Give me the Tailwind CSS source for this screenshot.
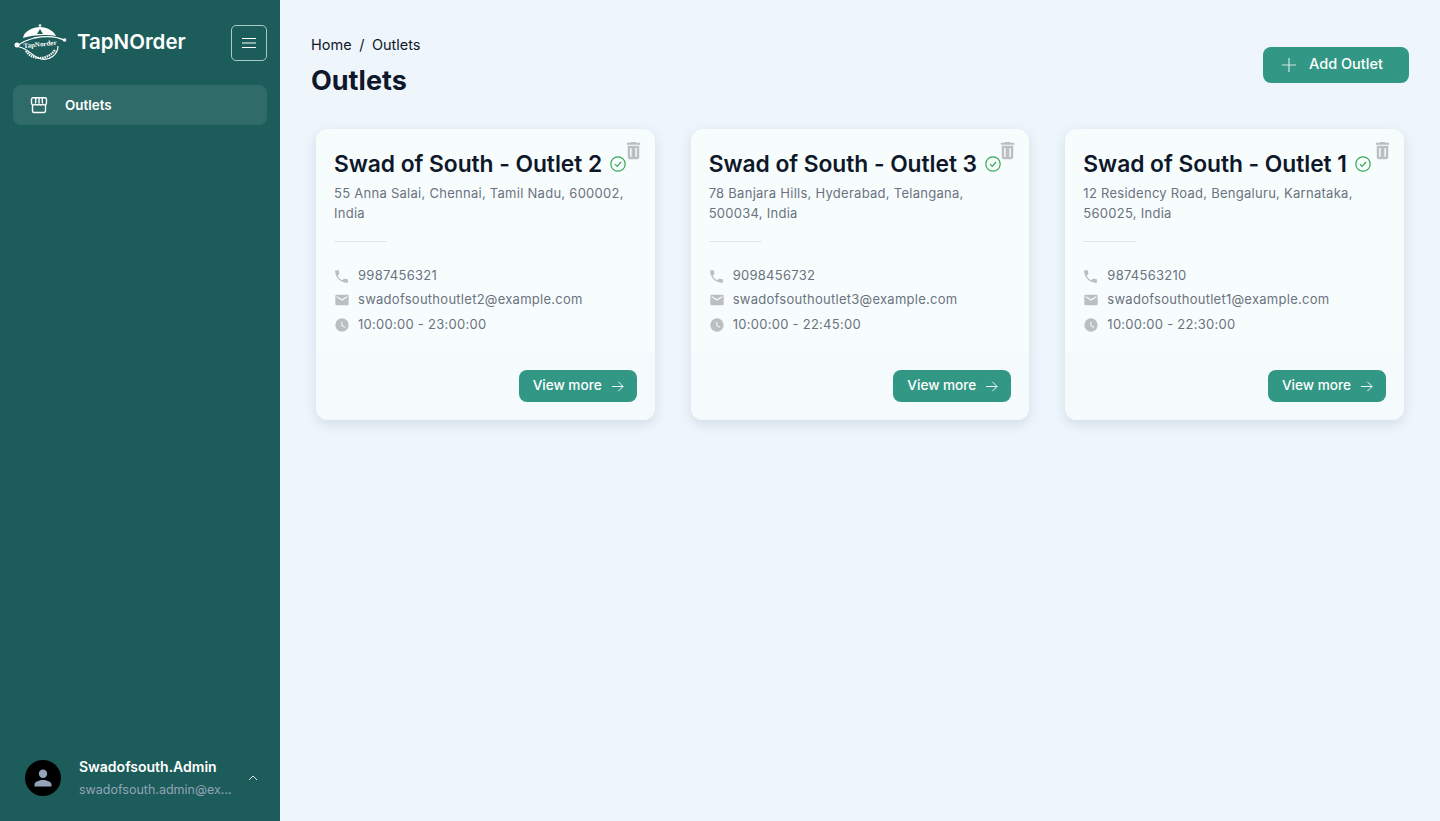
<!doctype html>
<html><head><meta charset="utf-8"><script src="https://cdn.jsdelivr.net/npm/@tailwindcss/browser@4"></script></head>
<body class="bg-[#eef6fc] font-['Inter',sans-serif]">
<div class="flex h-[821px] w-[1440px] overflow-hidden">
<aside class="flex w-[280px] shrink-0 flex-col bg-[#1c5c5a] text-white">
 <div class="flex h-[85px] items-center pr-[13px] pl-[14px]">
  <svg viewBox="0 0 54 40" class="h-[40px] w-[54px] shrink-0" fill="none">
   <path d="M9 15 C10 8 19 4 26 4 C33 4 40 8 42 13 C32 11 18 12 9 15Z" fill="#fff"/>
   <circle cx="26" cy="2.500" r="1.300" fill="#fff"/>
   <path d="M23 11 L26 6 L29 11Z" fill="#1c5c5a"/>
   <path d="M3 23 C8 19 13 17 20 15 C30 13 42 13 50 17" stroke="#fff" stroke-width="1.300"/>
   <circle cx="50.500" cy="17" r="1.800" fill="#fff"/>
   <circle cx="3" cy="22" r="2.500" fill="#fff"/>
   <path d="M5 24 C14 25 17 33 27 36 C36 38 44 31 44 23" stroke="#fff" stroke-width="1.200"/>
   <path d="M12 28 C18 37 33 38 41 27" stroke="#fff" stroke-width="2.200" stroke-dasharray="1.500 .8"/>
   <text x="26" y="23.500" text-anchor="middle" font-size="7" font-weight="800" fill="#fff" font-family="Liberation Serif" transform="rotate(-6 26 21)">TapNorder</text>
  </svg>
  <span class="mb-[2px] ml-[9px] text-[20.500px] leading-7 font-semibold">TapNOrder</span>
  <button class="ml-auto flex size-[36px] items-center justify-center rounded-[5px] border border-[#a9cbc8]">
   <svg viewBox="0 0 16 16" class="size-[16px]" stroke="#fff" stroke-width="1.100"><path d="M1 3.500H15M1 8H15M1 12.500H15"/></svg>
  </button>
 </div>
 <nav class="mx-[13px] flex h-[40px] items-center rounded-lg bg-[#2f6b69] pl-[17px]">
  <svg viewBox="0 0 18 18" class="size-[18px]" fill="none" stroke="#fff" stroke-width="1.400" stroke-linejoin="round"><path d="M2.500 9v6a1.500 1.500 0 0 0 1.500 1.500h10a1.500 1.500 0 0 0 1.500-1.500V9"/><path d="M3 1.700h12A1.500 1.500 0 0 1 16.500 3.200V7a2 2 0 0 1-3.700 1 2.300 2.300 0 0 1-3.800 0 2.300 2.300 0 0 1-3.800 0A2 2 0 0 1 1.500 7V3.200A1.500 1.500 0 0 1 3 1.700Z"/><path d="M5.700 2V7M9 2V7M12.300 2V7"/></svg>
  <span class="mt-[1px] ml-[17px] text-[13.400px] font-semibold">Outlets</span>
 </nav>
 <div class="mt-auto flex h-[71px] items-center pb-[15px] pl-[25px]">
  <div class="flex size-[36px] shrink-0 items-center justify-center rounded-full bg-black">
   <svg viewBox="0 0 24 24" class="size-[24px]" fill="#94a3b8"><path d="M12 12a4.200 4.200 0 1 0 0-8.400 4.200 4.200 0 0 0 0 8.400Zm0 2c-3.200 0-8.500 1.500-8.500 4.500V20.500h17v-2c0-3-5.300-4.500-8.500-4.500Z"/></svg>
  </div>
  <div class="ml-[18px] w-[153px] min-w-0">
   <div class="text-[14px] leading-5 font-semibold">Swadofsouth.Admin</div>
   <div class="mt-[3px] text-[12.500px] leading-5 whitespace-nowrap text-[#94a3b8]">swadofsouth.admin@ex...</div>
  </div>
  <svg viewBox="0 0 12 12" class="ml-[15px] size-[12px]" fill="none" stroke="#dbe7e6" stroke-width="1"><path d="M2 8l4-4 4 4"/></svg>
 </div>
</aside>
<main class="min-w-0 flex-1 pt-[35px] pr-[31px] pl-[31px]">
 <div class="flex items-start justify-between">
  <div>
   <div class="text-[14.500px] leading-5 text-[#0f172a]">Home<span class="mx-[7.500px]">/</span>Outlets</div>
   <h1 class="mt-[6px] text-[27px] leading-[40px] font-bold text-[#0f172a]">Outlets</h1>
  </div>
  <button class="mt-[12px] flex h-[36px] w-[146px] items-center rounded-lg bg-[#339785] pl-[19px] text-white">
   <svg viewBox="0 0 14 14" class="size-[14px]" stroke="#cfe8e3" stroke-width="1.200"><path d="M7 0V14M0 7H14"/></svg>
   <span class="ml-[13px] pb-[3px] text-[14.500px] font-medium">Add Outlet</span>
  </button>
 </div>
 <div class="mt-[28px] mr-[5px] ml-[5px] grid grid-cols-3 gap-x-[36px]">
  <!-- card 1 -->
  <article class="flex h-[291px] flex-col overflow-hidden rounded-xl bg-[#f7fdfd] shadow-[0_4px_12px_rgba(100,116,139,0.2)]">
   <div class="relative h-[223px] px-[18px] pt-[20px] text-[13px] tracking-[0.27px] text-[#6b7280]">
    <svg viewBox="0 0 24 24" class="absolute top-[10px] right-[10px] size-[23px]" fill="#bcbfc2"><path d="M6 19c0 1.100.9 2 2 2h8c1.100 0 2-.9 2-2V7H6v12ZM8.500 9.500h1.500v9H8.500v-9Zm5.500 0h1.500v9H14v-9ZM15.500 4l-1-1h-5l-1 1H5v2h14V4h-3.500Z"/></svg>
    <div class="flex h-[30px] items-center"><h2 class="text-[22.800px] leading-7 font-semibold tracking-[-0.05px] whitespace-nowrap text-[#0f172a]">Swad of South - Outlet 2</h2>
     <svg viewBox="0 0 16 16" class="ml-[8px] size-[16px]" fill="none" stroke="#34a853" stroke-width="1.200"><circle cx="8" cy="8" r="7.200"/><path d="M5 8.200l2.200 2.200L11 6"/></svg></div>
    <p class="mt-[4px] leading-5">55 Anna Salai, Chennai, Tamil Nadu, 600002, India</p>
    <div class="mt-[18px] h-px w-[53px] bg-[#e2e5e9]"></div>
    <div class="mt-[22px] flex h-[24px] items-center"><svg viewBox="0 0 24 24" class="mr-[8px] -ml-[1px] size-[17px]" fill="#bcbfc2"><path d="M6.600 10.800c1.400 2.800 3.800 5.100 6.600 6.600l2.200-2.200c.3-.3.700-.4 1-.2 1.100.4 2.300.6 3.600.6.600 0 1 .4 1 1V20c0 .6-.4 1-1 1C10.600 21 3 13.400 3 4c0-.6.400-1 1-1h3.500c.6 0 1 .4 1 1 0 1.300.2 2.500.6 3.600.1.300 0 .7-.2 1l-2.300 2.200Z"/></svg>9987456321</div>
    <div class="flex h-[24px] items-center"><svg viewBox="0 0 24 24" class="mr-[8px] size-[16px]" fill="#bcbfc2"><path d="M20 4H4a2 2 0 0 0-2 2v12a2 2 0 0 0 2 2h16a2 2 0 0 0 2-2V6a2 2 0 0 0-2-2Zm0 4-8 5-8-5V6l8 5 8-5v2Z"/></svg>swadofsouthoutlet2@example.com</div>
    <div class="flex h-[26px] items-center"><svg viewBox="0 0 24 24" class="mr-[8px] size-[16px]" fill="#bcbfc2"><path d="M12 2a10 10 0 1 0 0 20 10 10 0 0 0 0-20Zm4.200 14.200L11 13V7h1.500v5.200l4.500 2.700-.8 1.300Z"/></svg>10:00:00 - 23:00:00</div>
   </div>
   <div class="flex flex-1 items-center justify-end bg-[#f5fafc] pr-[18px]">
    <button class="flex h-[32px] w-[118px] items-center rounded-lg bg-[#339785] pl-[14px] text-[13.600px] font-medium text-white"><span class="mb-[1px]">View more</span><svg viewBox="0 0 14 14" class="ml-[9px] size-[13px]" fill="none" stroke="#fff" stroke-width="1"><path d="M1 7H13M8 2l5 5-5 5"/></svg></button>
   </div>
  </article>
  <!-- card 2 -->
  <article class="flex h-[291px] flex-col overflow-hidden rounded-xl bg-[#f7fdfd] shadow-[0_4px_12px_rgba(100,116,139,0.2)]">
   <div class="relative h-[223px] px-[18px] pt-[20px] text-[13px] tracking-[0.27px] text-[#6b7280]">
    <svg viewBox="0 0 24 24" class="absolute top-[10px] right-[10px] size-[23px]" fill="#bcbfc2"><path d="M6 19c0 1.100.9 2 2 2h8c1.100 0 2-.9 2-2V7H6v12ZM8.500 9.500h1.500v9H8.500v-9Zm5.500 0h1.500v9H14v-9ZM15.500 4l-1-1h-5l-1 1H5v2h14V4h-3.500Z"/></svg>
    <div class="flex h-[30px] items-center"><h2 class="text-[22.800px] leading-7 font-semibold tracking-[-0.05px] whitespace-nowrap text-[#0f172a]">Swad of South - Outlet 3</h2>
     <svg viewBox="0 0 16 16" class="ml-[8px] size-[16px]" fill="none" stroke="#34a853" stroke-width="1.200"><circle cx="8" cy="8" r="7.200"/><path d="M5 8.200l2.200 2.200L11 6"/></svg></div>
    <p class="mt-[4px] leading-5">78 Banjara Hills, Hyderabad, Telangana, 500034, India</p>
    <div class="mt-[18px] h-px w-[53px] bg-[#e2e5e9]"></div>
    <div class="mt-[22px] flex h-[24px] items-center"><svg viewBox="0 0 24 24" class="mr-[8px] -ml-[1px] size-[17px]" fill="#bcbfc2"><path d="M6.600 10.800c1.400 2.800 3.800 5.100 6.600 6.600l2.200-2.200c.3-.3.700-.4 1-.2 1.100.4 2.300.6 3.600.6.600 0 1 .4 1 1V20c0 .6-.4 1-1 1C10.600 21 3 13.400 3 4c0-.6.400-1 1-1h3.500c.6 0 1 .4 1 1 0 1.300.2 2.500.6 3.600.1.300 0 .7-.2 1l-2.300 2.200Z"/></svg>9098456732</div>
    <div class="flex h-[24px] items-center"><svg viewBox="0 0 24 24" class="mr-[8px] size-[16px]" fill="#bcbfc2"><path d="M20 4H4a2 2 0 0 0-2 2v12a2 2 0 0 0 2 2h16a2 2 0 0 0 2-2V6a2 2 0 0 0-2-2Zm0 4-8 5-8-5V6l8 5 8-5v2Z"/></svg>swadofsouthoutlet3@example.com</div>
    <div class="flex h-[26px] items-center"><svg viewBox="0 0 24 24" class="mr-[8px] size-[16px]" fill="#bcbfc2"><path d="M12 2a10 10 0 1 0 0 20 10 10 0 0 0 0-20Zm4.200 14.200L11 13V7h1.500v5.200l4.500 2.700-.8 1.300Z"/></svg>10:00:00 - 22:45:00</div>
   </div>
   <div class="flex flex-1 items-center justify-end bg-[#f5fafc] pr-[18px]">
    <button class="flex h-[32px] w-[118px] items-center rounded-lg bg-[#339785] pl-[14px] text-[13.600px] font-medium text-white"><span class="mb-[1px]">View more</span><svg viewBox="0 0 14 14" class="ml-[9px] size-[13px]" fill="none" stroke="#fff" stroke-width="1"><path d="M1 7H13M8 2l5 5-5 5"/></svg></button>
   </div>
  </article>
  <!-- card 3 -->
  <article class="flex h-[291px] flex-col overflow-hidden rounded-xl bg-[#f7fdfd] shadow-[0_4px_12px_rgba(100,116,139,0.2)]">
   <div class="relative h-[223px] px-[18px] pt-[20px] text-[13px] tracking-[0.27px] text-[#6b7280]">
    <svg viewBox="0 0 24 24" class="absolute top-[10px] right-[10px] size-[23px]" fill="#bcbfc2"><path d="M6 19c0 1.100.9 2 2 2h8c1.100 0 2-.9 2-2V7H6v12ZM8.500 9.500h1.500v9H8.500v-9Zm5.500 0h1.500v9H14v-9ZM15.500 4l-1-1h-5l-1 1H5v2h14V4h-3.500Z"/></svg>
    <div class="flex h-[30px] items-center"><h2 class="text-[22.800px] leading-7 font-semibold tracking-[-0.05px] whitespace-nowrap text-[#0f172a]">Swad of South - Outlet 1</h2>
     <svg viewBox="0 0 16 16" class="ml-[8px] size-[16px]" fill="none" stroke="#34a853" stroke-width="1.200"><circle cx="8" cy="8" r="7.200"/><path d="M5 8.200l2.200 2.200L11 6"/></svg></div>
    <p class="mt-[4px] leading-5">12 Residency Road, Bengaluru, Karnataka, 560025, India</p>
    <div class="mt-[18px] h-px w-[53px] bg-[#e2e5e9]"></div>
    <div class="mt-[22px] flex h-[24px] items-center"><svg viewBox="0 0 24 24" class="mr-[8px] -ml-[1px] size-[17px]" fill="#bcbfc2"><path d="M6.600 10.800c1.400 2.800 3.800 5.100 6.600 6.600l2.200-2.200c.3-.3.700-.4 1-.2 1.100.4 2.300.6 3.600.6.600 0 1 .4 1 1V20c0 .6-.4 1-1 1C10.600 21 3 13.400 3 4c0-.6.400-1 1-1h3.500c.6 0 1 .4 1 1 0 1.300.2 2.500.6 3.600.1.300 0 .7-.2 1l-2.300 2.200Z"/></svg>9874563210</div>
    <div class="flex h-[24px] items-center"><svg viewBox="0 0 24 24" class="mr-[8px] size-[16px]" fill="#bcbfc2"><path d="M20 4H4a2 2 0 0 0-2 2v12a2 2 0 0 0 2 2h16a2 2 0 0 0 2-2V6a2 2 0 0 0-2-2Zm0 4-8 5-8-5V6l8 5 8-5v2Z"/></svg>swadofsouthoutlet1@example.com</div>
    <div class="flex h-[26px] items-center"><svg viewBox="0 0 24 24" class="mr-[8px] size-[16px]" fill="#bcbfc2"><path d="M12 2a10 10 0 1 0 0 20 10 10 0 0 0 0-20Zm4.200 14.200L11 13V7h1.500v5.200l4.500 2.700-.8 1.300Z"/></svg>10:00:00 - 22:30:00</div>
   </div>
   <div class="flex flex-1 items-center justify-end bg-[#f5fafc] pr-[18px]">
    <button class="flex h-[32px] w-[118px] items-center rounded-lg bg-[#339785] pl-[14px] text-[13.600px] font-medium text-white"><span class="mb-[1px]">View more</span><svg viewBox="0 0 14 14" class="ml-[9px] size-[13px]" fill="none" stroke="#fff" stroke-width="1"><path d="M1 7H13M8 2l5 5-5 5"/></svg></button>
   </div>
  </article>
 </div>
</main>
</div>
</body></html>
